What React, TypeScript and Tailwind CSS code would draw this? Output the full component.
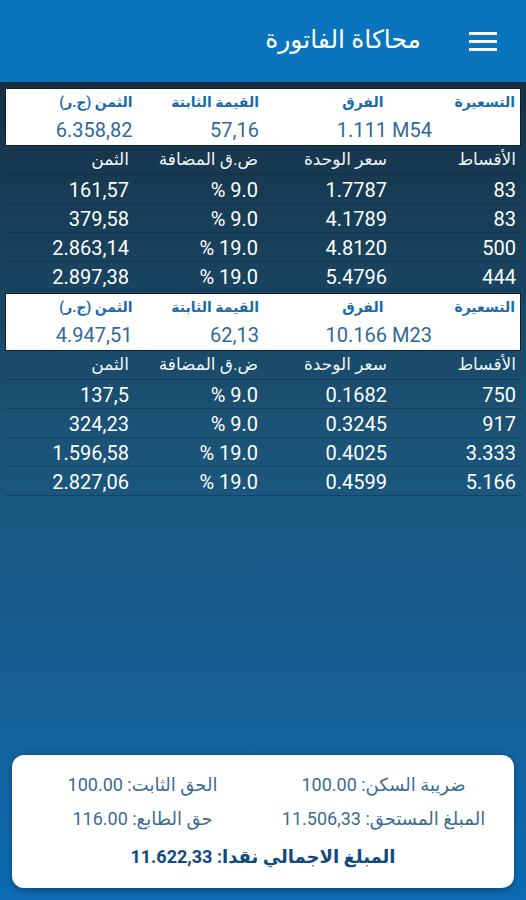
const groups = [
  {
    head: { diff: '1.111 M54', fixed: '57,16', price: '6.358,82' },
    rows: [
      ['83', '1.7787', '% 9.0', '161,57'],
      ['83', '4.1789', '% 9.0', '379,58'],
      ['500', '4.8120', '% 19.0', '2.863,14'],
      ['444', '5.4796', '% 19.0', '2.897,38'],
    ],
  },
  {
    head: { diff: '10.166 M23', fixed: '62,13', price: '4.947,51' },
    rows: [
      ['750', '0.1682', '% 9.0', '137,5'],
      ['917', '0.3245', '% 9.0', '324,23'],
      ['3.333', '0.4025', '% 19.0', '1.596,58'],
      ['5.166', '0.4599', '% 19.0', '2.827,06'],
    ],
  },
];

const cols = ['الأقساط', 'سعر الوحدة', 'ض.ق المضافة', 'الثمن'];

function Group({ g }: { g: (typeof groups)[number] }) {
  return (
    <div className="mb-[2px]">
      <div className="h-[58px] bg-white border border-[#0e2434] grid grid-cols-4 grid-rows-2 pt-[3px] pb-[3px]">
        <div className="pr-[5px] text-[14px] font-bold text-[#1b6ba8] leading-[20px]">التسعيرة</div>
        <div className="pr-[8px] text-[14px] font-bold text-[#1b6ba8] leading-[20px]">الفرق</div>
        <div className="pr-[4px] text-[14px] font-bold text-[#1b6ba8] leading-[20px]">القيمة الثابتة</div>
        <div className="pr-[2px] text-[14px] font-bold text-[#1b6ba8] leading-[20px]">الثمن (ج.ر)</div>
        <div className="col-span-2 pr-[88px] text-[20px] text-[#30699a] leading-[26px]">
          <span dir="ltr">{g.head.diff}</span>
        </div>
        <div className="pr-[4px] text-[20px] text-[#30699a] leading-[26px]">{g.head.fixed}</div>
        <div className="pr-[2px] text-[20px] text-[#30699a] leading-[26px]">
          <span dir="ltr">{g.head.price}</span>
        </div>
      </div>
      <div className="grid grid-cols-4 h-[29px] items-center border-b border-black/20 text-white text-[17px]">
        {cols.map((c, i) => (
          <div key={i} className="pr-[5px] opacity-95">
            {c}
          </div>
        ))}
      </div>
      {g.rows.map((r, ri) => (
        <div
          key={ri}
          className="grid grid-cols-4 h-[29px] items-center border-b border-black/20 text-white text-[20px]"
        >
          {r.map((v, i) => (
            <div key={i} className="pr-[5px]">
              <span dir="ltr">{v}</span>
            </div>
          ))}
        </div>
      ))}
    </div>
  );
}

export default function App() {
  return (
    <div
      dir="rtl"
      className="w-[526px] h-[900px] flex flex-col overflow-hidden bg-gradient-to-b from-[#132a3b] via-[#1b5478] to-[#0c6bb3]"
      style={{ fontFamily: "Roboto, 'DejaVu Sans', sans-serif" }}
    >
      <header className="h-[82px] shrink-0 bg-[#0a74bd] flex items-center pr-[29px] gap-[48px] shadow-md">
        <div className="w-[28px] flex flex-col gap-[5px]">
          <span className="h-[3px] bg-white" />
          <span className="h-[3px] bg-white" />
          <span className="h-[3px] bg-white" />
        </div>
        <h1 className="text-[25px] text-white pb-[2px]">محاكاة الفاتورة</h1>
      </header>

      <main className="px-[5px] pt-[6px]">
        {groups.map((g, i) => (
          <Group key={i} g={g} />
        ))}
      </main>

      <div className="flex-1" />

      <section className="mx-[12px] mb-[12px] h-[133px] bg-white rounded-[12px] shadow-[0_2px_6px_rgba(0,0,0,0.35)] px-[20px] pt-[17px] text-[#3a6c96] text-[18px]">
        <div className="grid grid-cols-2 gap-y-[9px] text-center leading-[25px]">
          <div className="pl-[10px]">ضريبة السكن: 100.00</div>
          <div className="pr-[10px]">الحق الثابت: 100.00</div>
          <div className="pl-[10px]">المبلغ المستحق: 11.506,33</div>
          <div className="pr-[10px]">حق الطابع: 116.00</div>
        </div>
        <div className="mt-[13px] text-center font-bold text-[#0f4a7e] text-[18px] leading-[25px]">
          المبلغ الاجمالي نقدا: 11.622,33
        </div>
      </section>
    </div>
  );
}
